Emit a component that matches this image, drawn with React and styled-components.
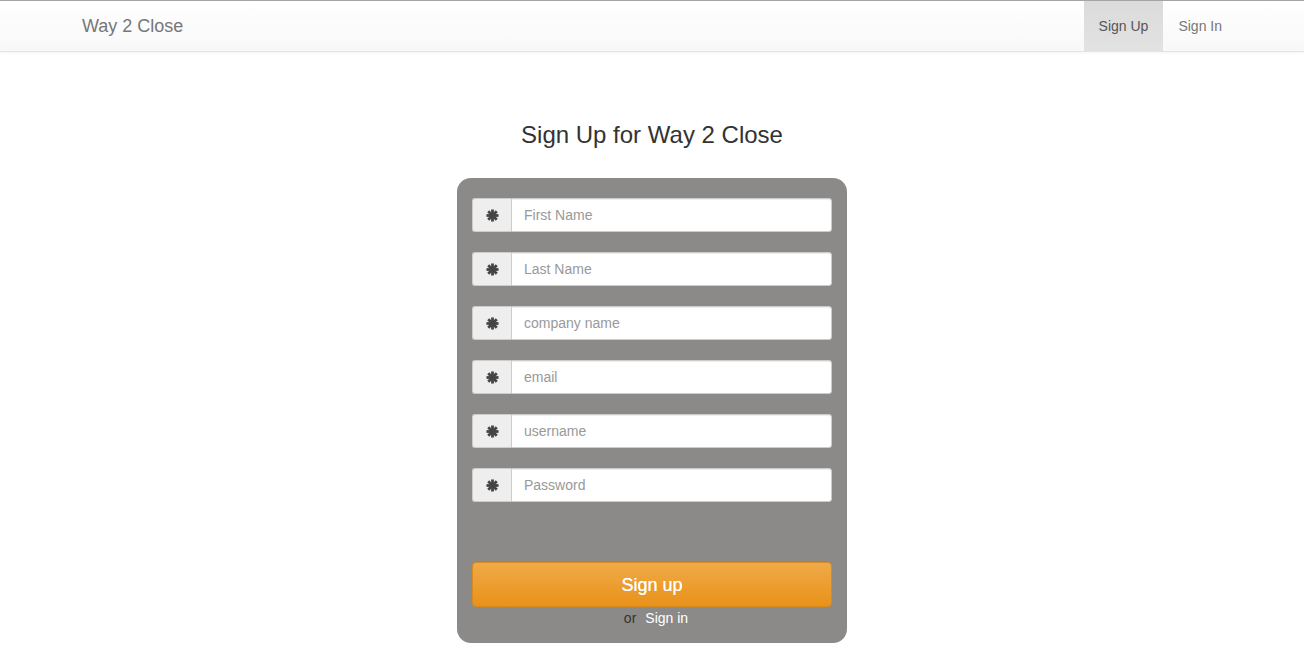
import React from 'react';
import styled, { createGlobalStyle } from 'styled-components';

const GlobalStyle = createGlobalStyle`
	* { box-sizing: border-box; }
	body {
		margin: 0;
		background: #fff;
		font-family: 'Liberation Sans', Arial, sans-serif;
		font-size: 14px;
		color: #333;
	}
`;

const Navbar = styled.nav`
	height: 52px;
	border-top: 1px solid #a4a4a4;
	border-bottom: 1px solid #e4e4e4;
	background: linear-gradient(#fff, #f8f8f8);
	box-shadow: 0 1px 3px rgba(0, 0, 0, 0.05);
`;

const NavContainer = styled.div`
	width: 1170px;
	margin: 0 auto;
	padding: 0 15px;
	display: flex;
	justify-content: space-between;
	height: 100%;
`;

const Brand = styled.a`
	font-size: 18px;
	color: #777;
	line-height: 50px;
	text-decoration: none;
`;

const NavList = styled.div`
	display: flex;
	margin-right: -15px;
`;

const NavItem = styled.a`
	padding: 0 15px;
	line-height: 50px;
	text-decoration: none;
	background: ${(props) => (props.active ? 'linear-gradient(#dbdbdb, #e2e2e2)' : 'transparent')};
	color: ${(props) => (props.active ? '#555' : '#777')};
`;

const Main = styled.main`
	display: flex;
	flex-direction: column;
	align-items: center;
	padding-top: 70px;
`;

const Title = styled.h3`
	margin: 0 0 30px;
	font-size: 24px;
	font-weight: 500;
	line-height: 26px;
	color: #333;
`;

const Card = styled.form`
	width: 390px;
	background: #8c8a88;
	border-radius: 14px;
	padding: 20px 15px 15px;
	display: flex;
	flex-direction: column;
`;

const Fields = styled.div`
	display: flex;
	flex-direction: column;
	gap: 20px;
	margin-bottom: 60px;
`;

const InputGroup = styled.div`
	display: flex;
	height: 34px;
`;

const Addon = styled.span`
	width: 39px;
	display: flex;
	align-items: center;
	justify-content: center;
	background: #eee;
	border: 1px solid #ccc;
	border-right: none;
	border-radius: 3px 0 0 3px;
	color: #555;
`;

const Input = styled.input`
	flex: 1;
	min-width: 0;
	height: 34px;
	border: 1px solid #ccc;
	border-radius: 0 3px 3px 0;
	padding: 0 12px;
	font-family: 'Liberation Sans', Arial, sans-serif;
	font-size: 14px;
	color: #555;
	box-shadow: inset 0 1px 1px rgba(0, 0, 0, 0.075);
	outline: none;
	&::placeholder { color: #999; }
`;

const SubmitButton = styled.button`
	height: 45px;
	padding-top: 2px;
	border: 1px solid #d98a1c;
	border-radius: 4px;
	background: linear-gradient(#f0aa48, #e8921a);
	color: #fff;
	font-family: 'Liberation Sans', Arial, sans-serif;
	font-size: 18px;
	text-shadow: 0 0 0.4px #fff;
	cursor: pointer;
`;

const Alt = styled.div`
	margin-top: 1px;
	padding-left: 8px;
	display: flex;
	justify-content: center;
	gap: 9px;
	line-height: 20px;
	color: #333;
`;

const AltLink = styled.a`
	color: #fff;
	text-decoration: none;
`;

function Asterisk() {
	return (
		<svg width="13" height="13" viewBox="0 0 14 14">
			<g stroke="#444" strokeWidth="3" strokeLinecap="butt">
				<line x1="7" y1="0.5" x2="7" y2="13.5" />
				<line x1="0.5" y1="7" x2="13.5" y2="7" />
				<line x1="2.4" y1="2.4" x2="11.6" y2="11.6" />
				<line x1="11.6" y1="2.4" x2="2.4" y2="11.6" />
			</g>
		</svg>
	);
}

const fields = [
	{ name: 'first', placeholder: 'First Name' },
	{ name: 'last', placeholder: 'Last Name' },
	{ name: 'company', placeholder: 'company name' },
	{ name: 'email', placeholder: 'email' },
	{ name: 'username', placeholder: 'username' },
	{ name: 'password', placeholder: 'Password', type: 'password' },
];

export default function App() {
	return (
		<>
			<GlobalStyle />
			<Navbar>
				<NavContainer>
					<Brand href="#">Way 2 Close</Brand>
					<NavList>
						<NavItem href="#" active>Sign Up</NavItem>
						<NavItem href="#">Sign In</NavItem>
					</NavList>
				</NavContainer>
			</Navbar>
			<Main>
				<Title>Sign Up for Way 2 Close</Title>
				<Card onSubmit={(e) => e.preventDefault()}>
					<Fields>
						{fields.map((f) => (
							<InputGroup key={f.name}>
								<Addon>
									<Asterisk />
								</Addon>
								<Input type={f.type || 'text'} name={f.name} placeholder={f.placeholder} />
							</InputGroup>
						))}
					</Fields>
					<SubmitButton type="submit">Sign up</SubmitButton>
					<Alt>
						<span>or</span>
						<AltLink href="#">Sign in</AltLink>
					</Alt>
				</Card>
			</Main>
		</>
	);
}
